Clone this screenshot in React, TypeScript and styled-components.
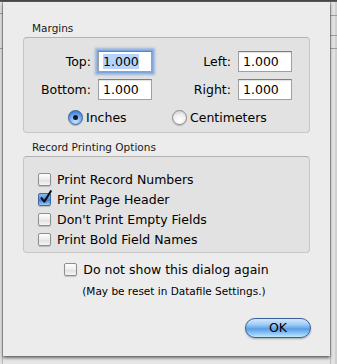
import React from "react";
import styled, { createGlobalStyle } from "styled-components";

const Global = createGlobalStyle`
  html, body { margin: 0; padding: 0; background: #e9e9e9; }
  body { font-family: "DejaVu Sans", "Liberation Sans", sans-serif; color: #000; }
`;

const Screen = styled.div`
  width: 337px;
  height: 364px;
  overflow: hidden;
  display: flex;
  flex-direction: column;
  background: #e6e6e6;
`;

const TitleEdge = styled.div`
  flex: none;
  height: 2px;
  background: linear-gradient(#3c3c3c, #6c6c6c);
`;

const Stage = styled.div`
  flex: 1;
  display: flex;
  align-items: flex-start;
`;

const line = (y: number) =>
  `linear-gradient(to bottom, transparent ${y}px, #9c9c9c ${y}px, #9c9c9c ${y + 1}px, transparent ${y + 1}px)`;

const LeftStrip = styled.div`
  flex: none;
  width: 3px;
  height: 362px;
  background: ${line(11)}, ${line(46)}, linear-gradient(to right, #dedede 2px, #b8b8b8 2px);
`;

const RightStrip = styled.div`
  flex: none;
  width: 7px;
  height: 362px;
  background: ${line(13)}, ${line(33)}, ${line(46)},
    linear-gradient(to right, #bdbdbd 1px, #e2e2e2 1px, #e2e2e2 5px, #cfcfcf 5px);
`;

const Sheet = styled.div`
  flex: none;
  width: 327px;
  height: 354px;
  box-sizing: border-box;
  padding: 20px 20px 0 20px;
  background: #ececec;
  box-shadow: 0 2px 3px rgba(0, 0, 0, 0.55), 0 0 1px rgba(0, 0, 0, 0.45);
  display: flex;
  flex-direction: column;
  position: relative;
  z-index: 1;
`;

const GroupLabel = styled.div<{ $top?: number }>`
  font-size: 10.5px;
  line-height: 13px;
  padding-left: 9px;
  margin-top: ${(p) => p.$top ?? 0}px;
  margin-bottom: 2px;
  color: #1a1a1a;
`;

const Box = styled.div<{ $pad: string }>`
  border: 1px solid #c6c6c6;
  border-top-color: #b3b3b3;
  border-radius: 4px;
  background: #e2e2e2;
  padding: ${(p) => p.$pad};
`;

const FieldGrid = styled.div`
  display: grid;
  grid-template-columns: 74px 54px 86px 54px;
  row-gap: 7px;
`;

const FieldLabel = styled.div`
  font-size: 12.5px;
  line-height: 21px;
  text-align: right;
  padding-right: 7px;
`;

const Field = styled.div<{ $focus?: boolean }>`
  box-sizing: border-box;
  height: 21px;
  background: #fff;
  border: 1px solid #a0a0a0;
  border-top-color: #7e7e7e;
  box-shadow: ${(p) =>
    p.$focus
      ? "0 0 0 1px #7fa6dc, 0 0 2px 3px rgba(120, 165, 225, 0.75)"
      : "inset 0 1px 1px rgba(0,0,0,0.12)"};
  font-size: 12.5px;
  line-height: 19px;
  padding-left: 4px;
`;

const Selected = styled.span`
  background: #b5d5ff;
`;

const RadioRow = styled.div`
  display: flex;
  margin-top: 10px;
  padding-left: 44px;
  height: 15px;
`;

const RadioItem = styled.div<{ $w?: number }>`
  display: flex;
  align-items: center;
  gap: 3px;
  width: ${(p) => (p.$w ? `${p.$w}px` : "auto")};
  font-size: 12.5px;
`;

const Radio = styled.div<{ $on?: boolean }>`
  width: 15px;
  height: 15px;
  box-sizing: border-box;
  border-radius: 50%;
  display: flex;
  align-items: center;
  justify-content: center;
  border: 1px solid ${(p) => (p.$on ? "#3d5f97" : "#8c8c8c")};
  background: ${(p) =>
    p.$on
      ? "radial-gradient(circle at 50% 80%, #c4e4ff 0%, #7cb4f0 45%, #3f7fd6 80%)"
      : "radial-gradient(circle at 50% 75%, #ffffff 0%, #f0f0f0 50%, #cfcfcf 90%)"};
  box-shadow: 0 1px 1px rgba(0, 0, 0, 0.2);
`;

const Dot = styled.div`
  width: 5px;
  height: 5px;
  border-radius: 50%;
  background: #15182a;
`;

const CheckList = styled.div`
  display: flex;
  flex-direction: column;
`;

const CheckRow = styled.div`
  display: flex;
  align-items: center;
  gap: 6px;
  height: 20px;
  font-size: 12.5px;
`;

const CheckBox = styled.div<{ $on?: boolean }>`
  position: relative;
  flex: none;
  width: 13px;
  height: 13px;
  box-sizing: border-box;
  border-radius: 2px;
  border: 1px solid ${(p) => (p.$on ? "#44679f" : "#8e8e8e")};
  background: ${(p) =>
    p.$on
      ? "linear-gradient(#8cbaf0, #4d8ddd 50%, #3d7fd6 55%, #9ccbf7)"
      : "linear-gradient(#fefefe, #ececec 50%, #e0e0e0 55%, #f6f6f6)"};
  box-shadow: 0 1px 1px rgba(0, 0, 0, 0.18);
`;

const CheckMark = styled.svg`
  position: absolute;
  left: 0px;
  top: -4px;
  width: 13px;
  height: 15px;
  overflow: visible;
`;

const Footer = styled.div`
  align-self: center;
  margin-top: 6px;
  display: flex;
  flex-direction: column;
`;

const Note = styled.div`
  font-size: 10.5px;
  line-height: 13px;
  margin-top: 6px;
  padding-left: 18px;
`;

const ButtonRow = styled.div`
  display: flex;
  justify-content: flex-end;
  margin-top: 20px;
  margin-right: -1px;
`;

const OkButton = styled.div`
  width: 66px;
  height: 20px;
  box-sizing: border-box;
  border-radius: 10px;
  border: 1px solid #3b5f9c;
  background: linear-gradient(#d2e8fd 0%, #a2cdf6 30%, #6aa9ea 50%, #5a9ee8 55%, #8cc6f8 80%, #bfe6ff 100%);
  box-shadow: 0 1px 2px rgba(0, 0, 0, 0.3);
  display: flex;
  align-items: center;
  justify-content: center;
  font-size: 12.5px;
  line-height: 18px;
`;

const Check = ({ on, label }: { on?: boolean; label: string }) => (
  <CheckRow>
    <CheckBox $on={on}>
      {on && (
        <CheckMark viewBox="0 0 13 15">
          <path d="M2.5 8.2 L5.3 11.6 L11.8 1.2" fill="none" stroke="#0d0d14" strokeWidth="2.1" strokeLinecap="round" strokeLinejoin="round" />
        </CheckMark>
      )}
    </CheckBox>
    {label}
  </CheckRow>
);

export default function App() {
  return (
    <>
      <Global />
      <Screen>
        <TitleEdge />
        <Stage>
          <LeftStrip />
          <Sheet>
            <GroupLabel>Margins</GroupLabel>
            <Box $pad="13px 0 7px 0">
              <FieldGrid>
                <FieldLabel>Top:</FieldLabel>
                <Field $focus>
                  <Selected>1.000</Selected>
                </Field>
                <FieldLabel>Left:</FieldLabel>
                <Field>1.000</Field>
                <FieldLabel>Bottom:</FieldLabel>
                <Field>1.000</Field>
                <FieldLabel>Right:</FieldLabel>
                <Field>1.000</Field>
              </FieldGrid>
              <RadioRow>
                <RadioItem $w={104}>
                  <Radio $on>
                    <Dot />
                  </Radio>
                  Inches
                </RadioItem>
                <RadioItem>
                  <Radio />
                  Centimeters
                </RadioItem>
              </RadioRow>
            </Box>
            <GroupLabel $top={8}>Record Printing Options</GroupLabel>
            <Box $pad="12px 0 3px 14px">
              <CheckList>
                <Check label="Print Record Numbers" />
                <Check on label="Print Page Header" />
                <Check label="Don't Print Empty Fields" />
                <Check label="Print Bold Field Names" />
              </CheckList>
            </Box>
            <Footer>
              <Check label="Do not show this dialog again" />
              <Note>(May be reset in Datafile Settings.)</Note>
            </Footer>
            <ButtonRow>
              <OkButton>OK</OkButton>
            </ButtonRow>
          </Sheet>
          <RightStrip />
        </Stage>
      </Screen>
    </>
  );
}
